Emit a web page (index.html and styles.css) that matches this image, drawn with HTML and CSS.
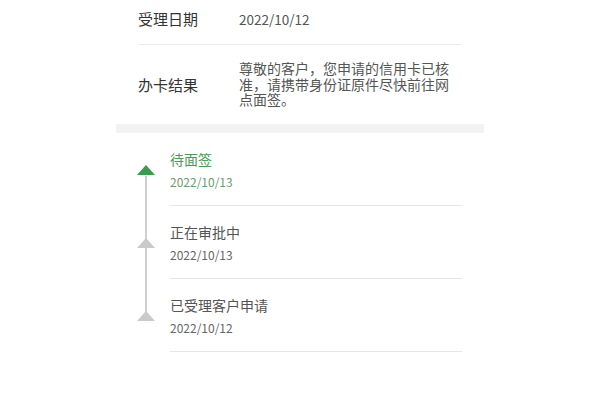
FILE: index.html
```html
<!DOCTYPE html>
<html lang="zh-CN">
<head>
    <meta charset="UTF-8">
    <meta name="viewport" content="width=device-width, initial-scale=1.0">
    <title>办卡进度</title>
    <link rel="stylesheet" href="styles.css">
</head>
<body>
    <div class="progress-page">
        <!-- Application info -->
        <div class="info-list">
            <div class="info-row first">
                <span class="info-label">受理日期</span>
                <span class="info-value">2022/10/12</span>
            </div>
            <div class="info-row">
                <span class="info-label">办卡结果</span>
                <span class="info-value result">尊敬的客户，您申请的信用卡已核准，请携带身份证原件尽快前往网点面签。</span>
            </div>
        </div>

        <div class="gap-band"></div>

        <!-- Progress timeline -->
        <div class="timeline">
            <div class="step current">
                <span class="marker"></span>
                <p class="step-title">待面签</p>
                <p class="step-date">2022/10/13</p>
            </div>
            <div class="step">
                <span class="marker"></span>
                <p class="step-title">正在审批中</p>
                <p class="step-date">2022/10/13</p>
            </div>
            <div class="step">
                <span class="marker"></span>
                <p class="step-title">已受理客户申请</p>
                <p class="step-date">2022/10/12</p>
            </div>
        </div>
    </div>
</body>
</html>
```

FILE: styles.css
```css
body {
    font-family: "Noto Sans CJK SC", "Noto Sans", sans-serif;
    background-color: #fff;
    margin: 0;
    padding: 0;
    color: #333;
}

.progress-page {
    width: 368px;
    margin: 0 auto;
}

/* Info rows */
.info-list {
    padding: 0 22px;
}

.info-row {
    display: flex;
    align-items: center;
    padding: 16px 0;
    border-bottom: 1px solid #ececec;
}

.info-row.first {
    padding: 8px 0 14px;
    line-height: 22px;
}

.info-row:last-child {
    border-bottom: none;
}

.info-label {
    width: 101px;
    flex-shrink: 0;
    font-size: 15px;
    color: #333;
}

.info-value {
    font-size: 13.5px;
    color: #555;
}

.info-value.result {
    width: 214px;
    font-size: 14px;
    line-height: 15.5px;
}

.gap-band {
    height: 9px;
    background-color: #f2f2f2;
}

/* Timeline */
.timeline {
    position: relative;
    padding: 0 22px 0 54px;
}

.timeline::before {
    content: "";
    position: absolute;
    left: 29px;
    top: 43px;
    width: 2px;
    height: 145px;
    background-color: #cfcfcf;
}

.step {
    position: relative;
    padding: 16px 0 14px;
    border-bottom: 1px solid #e6e6e6;
}

.step p {
    margin: 0;
}

.marker {
    position: absolute;
    left: -33px;
    top: 32px;
    width: 0;
    height: 0;
    border-left: 9px solid transparent;
    border-right: 9px solid transparent;
    border-bottom: 10px solid #cacaca;
}

.step.current .marker {
    border-bottom-color: #3d9a4e;
}

.step-title {
    font-size: 14px;
    line-height: 20px;
    color: #555;
}

.step-date {
    margin-top: 4px !important;
    font-size: 12px;
    line-height: 18px;
    color: #666;
}

.step.current .step-title {
    color: #4a9a59;
}

.step.current .step-date {
    color: #6a9c75;
}
```
